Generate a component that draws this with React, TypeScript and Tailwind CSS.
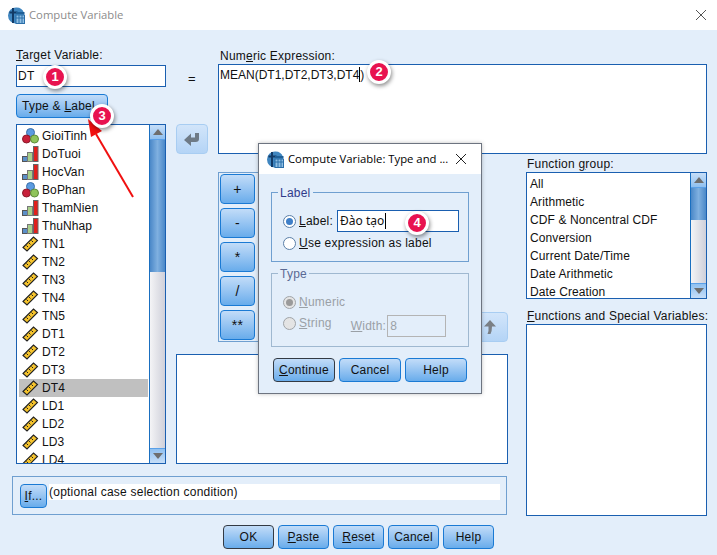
import type { ReactNode } from "react";

const font = "font-['Liberation_Sans',Arial,sans-serif]";

const Nominal = () => (
  <svg width="17" height="16" viewBox="0 0 17 16" className="shrink-0">
    <circle cx="8.5" cy="4.5" r="4" fill="#5b9be0" stroke="#3b6fa8" />
    <circle cx="4.5" cy="11" r="4" fill="#c8203a" stroke="#8a1a2a" />
    <circle cx="12.5" cy="11" r="4" fill="#8fc45a" stroke="#5d8a3a" />
  </svg>
);

const Ordinal = () => (
  <svg width="17" height="16" viewBox="0 0 17 16" className="shrink-0">
    <rect x="0.5" y="10.5" width="5" height="5" fill="#5b8fc8" stroke="#555" />
    <rect x="5.5" y="6.5" width="5" height="9" fill="#a8cf8a" stroke="#777" />
    <rect x="11.5" y="0.5" width="4.5" height="15" fill="#e0201c" stroke="#666" />
  </svg>
);

const Scale = () => (
  <svg width="17" height="16" viewBox="0 0 17 16" className="shrink-0">
    <path d="M1 11.5 L11.5 1 L15.5 4.5 L5 15 Z" fill="#f5c32c" stroke="#222" strokeWidth="1.1" />
    <path d="M4.5 9.5l1.5 1.5M7 7l1.5 1.5M9.5 4.5L11 6" stroke="#222" strokeWidth="1" />
  </svg>
);

const SpssIcon = () => (
  <svg width="17" height="17" viewBox="0 0 17 17" className="shrink-0">
    <path d="M8 0.5 A8 8 0 0 0 8 16.5 L16 16.5 L16 6 A8 8 0 0 0 8 0.5 Z" fill="#3f86c0" />
    <path d="M5 1v15M1.5 5.5h8" stroke="#123a66" strokeWidth="2" />
    <rect x="8" y="5" width="8.5" height="2" fill="#1f5f96" />
    <rect x="8" y="8" width="8.5" height="8.5" fill="#8fbfe4" stroke="#2b6ea8" />
    <path d="M11 8v8M14 8v8M8 11h8" stroke="#2b6ea8" />
  </svg>
);

const BackArrow = () => (
  <svg width="18" height="16" viewBox="0 0 18 16">
    <path d="M1 9 L8 2.5 V6.5 H12 V2 H16 V8 Q16 11 12.5 11 H8 V15 Z" fill="#6e7a86" />
  </svg>
);

const UpArrow = () => (
  <svg width="14" height="16" viewBox="0 0 14 16">
    <path d="M7 1 L13 7.5 H9 Q9 12 7.5 15 H4.5 Q6 12 5.5 7.5 H1 Z" fill="#7a7f85" />
  </svg>
);

const CircleBadge = ({ n, className }: { n: number; className: string }) => (
  <div
    className={`absolute flex h-[24px] w-[24px] items-center justify-center rounded-full border-[3px] border-white bg-[#e8134f] text-[13px] font-bold tracking-normal text-white shadow-[1px_2px_4px_rgba(0,0,0,0.45)] ${font} ${className}`}
  >
    {n}
  </div>
);

const Btn = ({ children, className = "", dark = false }: { children: ReactNode; className?: string; dark?: boolean }) => (
  <div
    className={`flex items-center justify-center rounded-[4px] border bg-gradient-to-b from-[#c2dcf8] to-[#68aceb] text-[12px] text-[#111] ${dark ? "border-[#333a44]" : "border-[#1a7ad4]"} ${className}`}
  >
    {children}
  </div>
);

const KeyBtn = ({ label }: { label: string }) => (
  <Btn className="h-[30px] w-[35px] text-[14px]">{label}</Btn>
);

const ScrollBar = ({ thumb }: { thumb: string }) => (
  <div className="flex w-[16px] shrink-0 flex-col border-l border-[#1a6fc0] bg-gradient-to-r from-[#f4f4f6] to-[#cfd0da]">
    <div className="flex h-[15px] items-center justify-center border-b border-[#5aa0e8] bg-gradient-to-b from-[#c6def8] to-[#8fc0f0]">
      <div className="h-0 w-0 border-x-[5px] border-b-[6px] border-x-transparent border-b-[#6e6e6e]" />
    </div>
    <div className={`bg-gradient-to-r from-[#4a88c8] via-[#7fb0e0] to-[#4a88c8] ${thumb}`} />
    <div className="flex-1" />
    <div className="flex h-[15px] items-center justify-center border-t border-[#5aa0e8] bg-gradient-to-b from-[#8fc0f0] to-[#c6def8]">
      <div className="h-0 w-0 border-x-[5px] border-t-[6px] border-x-transparent border-t-[#6e6e6e]" />
    </div>
  </div>
);

const vars: [string, "n" | "o" | "s"][] = [
  ["GioiTinh", "n"],
  ["DoTuoi", "o"],
  ["HocVan", "o"],
  ["BoPhan", "n"],
  ["ThamNien", "o"],
  ["ThuNhap", "o"],
  ["TN1", "s"],
  ["TN2", "s"],
  ["TN3", "s"],
  ["TN4", "s"],
  ["TN5", "s"],
  ["DT1", "s"],
  ["DT2", "s"],
  ["DT3", "s"],
  ["DT4", "s"],
  ["LD1", "s"],
  ["LD2", "s"],
  ["LD3", "s"],
  ["LD4", "s"],
];

const groups = ["All", "Arithmetic", "CDF & Noncentral CDF", "Conversion", "Current Date/Time", "Date Arithmetic", "Date Creation"];

const Radio = ({ on, off }: { on: boolean; off?: boolean }) => (
  <div
    className={`ml-[-1px] flex h-[13px] w-[13px] shrink-0 items-center justify-center rounded-full border ${off ? "border-[#a0a4a8] bg-[#e4e4e4]" : "border-[#5a7fa8] bg-white"}`}
  >
    {on && <div className={`h-[7px] w-[7px] rounded-full ${off ? "bg-[#9a9a9a]" : "bg-[#3f7fc8]"}`} />}
  </div>
);

const TypeDialog = () => (
  <div className="absolute left-[258px] top-[143px] flex h-[251px] w-[224px] flex-col border border-[#6d7480] bg-[#e3eefa] shadow-[0_0_4px_rgba(0,0,0,0.25)]">
    <div className="flex h-[30px] shrink-0 items-center bg-white pl-[8px] pr-[14px]">
      <SpssIcon />
      <span className="ml-[4px] flex-1 whitespace-nowrap font-['Open_Sans',sans-serif] text-[11.3px] tracking-normal text-black">Compute Variable: Type and ...</span>
      <svg width="12" height="12" viewBox="0 0 12 12">
        <path d="M1 1l10 10M11 1L1 11" stroke="#222" strokeWidth="1" />
      </svg>
    </div>
    <div className="relative mx-[12px] mt-[18px] h-[70px] border border-[#6f9fd0] pl-[12px] pt-[17px]">
      <span className="absolute left-[6px] top-[-9px] bg-[#e3eefa] px-[2px] text-[#303a8a]">Label</span>
      <div className="flex h-[22px] items-center">
        <Radio on />
        <span className="ml-[3px]"><u>L</u>abel:</span>
        <div className="ml-[4px] flex h-[22px] w-[122px] shrink-0 items-center border border-[#1a5fb0] bg-white pl-[2px] font-['Noto_Sans','Liberation_Sans',sans-serif] tracking-normal">
          Đào tạo<span className="ml-px h-[16px] w-px bg-black" />
        </div>
      </div>
      <div className="flex h-[22px] items-center">
        <Radio on={false} />
        <span className="ml-[3px]"><u>U</u>se expression as label</span>
      </div>
    </div>
    <div className="relative mx-[12px] mt-[11px] h-[74px] border border-[#9fb8d0] pl-[12px] pt-[18px] text-[#9aa0a6]">
      <span className="absolute left-[6px] top-[-9px] bg-[#e3eefa] px-[2px] text-[#5a6a94]">Type</span>
      <div className="flex h-[20px] items-center">
        <Radio on off />
        <span className="ml-[3px]"><u>N</u>umeric</span>
      </div>
      <div className="flex h-[22px] items-center">
        <Radio on={false} off />
        <span className="ml-[3px]"><u>S</u>tring</span>
        <span className="ml-[19px] mt-[6px]"><u>W</u>idth:</span>
        <div className="ml-px mt-[6px] flex h-[22px] w-[59px] shrink-0 items-center border border-[#b4b4b4] pl-[2px]">8</div>
      </div>
    </div>
    <div className="ml-[14px] mt-[11px] flex gap-[4px]">
      <Btn dark className="h-[24px] w-[62px]"><span><u>C</u>ontinue</span></Btn>
      <Btn className="h-[24px] w-[62px]">Cancel</Btn>
      <Btn className="h-[24px] w-[62px]">Help</Btn>
    </div>
  </div>
);

const App = () => {
  return (
    <div className={`relative flex h-[555px] w-[717px] flex-col overflow-hidden bg-[#e3eefa] text-[12px] tracking-[0.23px] text-[#111] ${font}`}>
      <div className="flex h-[30px] shrink-0 items-center bg-white pl-[8px] pr-[10px]">
        <SpssIcon />
        <span className="ml-[4px] flex-1 font-['Open_Sans',sans-serif] text-[11.3px] tracking-normal text-[#8c8c8c]">Compute Variable</span>
        <svg width="12" height="12" viewBox="0 0 12 12">
          <path d="M1 1l10 10M11 1L1 11" stroke="#555" strokeWidth="1" />
        </svg>
      </div>

      <div className="grid grid-cols-[150px_10px_42px_290px_18px_181px] grid-rows-[106px_310px_52px_39px] pl-[16px] pt-[18px]">
        {/* variable list */}
        <div className="row-span-2 flex flex-col">
          <div className="h-[17px] leading-[15px]"><u>T</u>arget Variable:</div>
          <div className="flex h-[22px] items-center border border-[#1a5fb0] bg-white pl-[1px]">DT</div>
          <Btn className="mt-[7px] h-[24px] w-[92px]"><span className="mr-[7px]">Type &amp; <u>L</u>abel</span></Btn>
          <div className="mt-[6px] flex h-[340px] border border-[#1a5fb0] bg-white">
            <div className="flex-1 overflow-hidden pl-[2px] pr-px pt-[2px] tracking-[0.1px]">
              {vars.map(([name, kind]) => (
                <div key={name} className={`flex h-[18px] items-center gap-[3px] pl-[3px] ${name === "DT4" ? "bg-[#c0c0c0]" : ""}`}>
                  {kind === "n" ? <Nominal /> : kind === "o" ? <Ordinal /> : <Scale />}
                  {name}
                </div>
              ))}
            </div>
            <ScrollBar thumb="h-[132px]" />
          </div>
        </div>

        {/* = and move arrow */}
        <div className="col-start-3 flex flex-col items-start">
          <div className="ml-[12px] mt-[20px] h-[56px] text-[13px] leading-[22px]">=</div>
          <div className="flex h-[30px] w-[32px] items-center justify-center rounded-[4px] border border-[#a8cdf2] bg-gradient-to-b from-[#d2e5fa] to-[#b4d4f6]">
            <BackArrow />
          </div>
        </div>

        {/* numeric expression */}
        <div className="col-span-3 col-start-4 flex flex-col">
          <div className="h-[16px] pl-[2px] pt-px leading-[15px]">Num<u>e</u>ric Expression:</div>
          <div className="flex h-[90px] items-start border border-[#1a5fb0] bg-white pl-px pt-[2px] leading-[16px] tracking-normal">
            MEAN(DT1,DT2,DT3,DT4<span className="h-[15px] w-px bg-black" />)
          </div>
        </div>

        {/* keypad and lower box */}
        <div className="col-span-2 col-start-3 row-start-2 flex flex-col">
          <div className="flex">
            <div className="ml-[42px] mt-[18px] flex h-[170px] w-[250px] flex-col gap-[4px] border border-[#6f9fd0] p-[1px]">
              <KeyBtn label="+" />
              <KeyBtn label="-" />
              <KeyBtn label="*" />
              <KeyBtn label="/" />
              <KeyBtn label="**" />
            </div>
            <div className="ml-[-11px] mt-[158px] flex h-[30px] w-[51px] items-center justify-end rounded-[4px] border border-[#a8cdf2] bg-gradient-to-b from-[#d2e5fa] to-[#b4d4f6] pr-[10px]">
              <UpArrow />
            </div>
          </div>
          <div className="mt-[12px] h-[110px] w-[332px] border border-[#1a5fb0] bg-white" />
        </div>

        {/* function group */}
        <div className="col-start-6 row-span-2 row-start-2 flex flex-col">
          <div className="mt-[3px] h-[15px] pl-px leading-[15px]">Function <u>g</u>roup:</div>
          <div className="flex h-[127px] border border-[#1a5fb0] bg-white">
            <div className="flex-1 overflow-hidden pl-[3px] pt-[2px] tracking-[0.1px]">
              {groups.map((g) => (
                <div key={g} className="flex h-[18px] items-center">{g}</div>
              ))}
            </div>
            <ScrollBar thumb="h-[32px]" />
          </div>
          <div className="mt-[10px] h-[15px] whitespace-nowrap pl-px leading-[15px]"><u>F</u>unctions and Special Variables:</div>
          <div className="h-[192px] border border-[#1a5fb0] bg-white" />
        </div>

        {/* if row */}
        <div className="col-span-4 row-start-3 ml-[-4px] mt-[12px] flex h-[39px] w-[495px] items-start border border-[#6f9fd0] pl-[7px] pt-[7px]">
          <Btn className="h-[24px] w-[27px]"><span><u>I</u>f...</span></Btn>
          <div className="ml-[2px] h-[16px] w-[451px] bg-white leading-[16px]">(optional case selection condition)</div>
        </div>

        {/* bottom buttons */}
        <div className="col-span-6 row-start-4 flex gap-[4px] pl-[207px] pt-[9px]">
          <Btn dark className="h-[24px] w-[51px]">OK</Btn>
          <Btn className="h-[24px] w-[51px]"><span><u>P</u>aste</span></Btn>
          <Btn className="h-[24px] w-[51px]"><span><u>R</u>eset</span></Btn>
          <Btn className="h-[24px] w-[51px]">Cancel</Btn>
          <Btn className="h-[24px] w-[51px]">Help</Btn>
        </div>
      </div>

      <TypeDialog />

      {/* annotations */}
      <svg width="717" height="555" className="pointer-events-none absolute left-0 top-0">
        <path d="M133 197 L96 134" stroke="#f01010" strokeWidth="2" />
        <path d="M88 119 L102 131 L91 137 Z" fill="#f01010" />
      </svg>
      <CircleBadge n={1} className="left-[43px] top-[65px]" />
      <CircleBadge n={2} className="left-[367px] top-[60px]" />
      <CircleBadge n={3} className="left-[90px] top-[104px]" />
      <CircleBadge n={4} className="left-[405px] top-[211px]" />
    </div>
  );
};

export default App;
